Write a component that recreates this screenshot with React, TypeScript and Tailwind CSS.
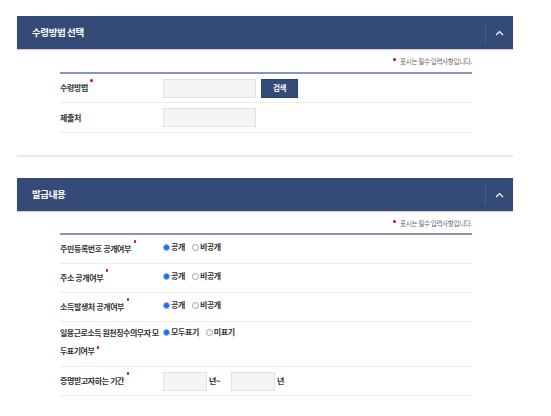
import type { ReactNode } from "react";

const Req = () => (
  <span className="absolute -right-[5px] -top-[4px] h-[2.5px] w-[2.5px] rounded-full bg-[#e60012]" />
);

const Label = ({ children }: { children: ReactNode }) => (
  <span className="relative text-[8px] font-bold leading-[10px] tracking-[-0.4px] text-[#333]">
    {children}
    <Req />
  </span>
);

const Radio = ({ checked, label }: { checked?: boolean; label: string }) => (
  <label className="flex items-center gap-[1px]">
    {checked ? (
      <span className="h-[7px] w-[7px] rounded-full border border-[#8db8f5] bg-[#1a6fe6]" />
    ) : (
      <span className="h-[7px] w-[7px] rounded-full border border-[#a0a0a0] bg-white" />
    )}
    <span className="text-[8px] font-bold leading-[10px] tracking-[-0.4px] text-[#333]">{label}</span>
  </label>
);

const Input = ({ w }: { w: string }) => (
  <div className={`${w} h-[19px] border border-[#e2e2e2] bg-[#f4f4f4]`} />
);

const Row = ({ label, children }: { label: ReactNode; children: ReactNode }) => (
  <div className="flex h-[29px] items-center border-b border-[#ececec]">
    <div className="flex w-[103px] shrink-0 items-center">{label}</div>
    <div className="flex items-center">{children}</div>
  </div>
);

const Section = ({ title, top, children }: { title: string; top: string; children: ReactNode }) => (
  <section>
    <div className="flex h-[33px] items-center bg-[#344b78] pl-[15px] shadow-[0_1px_1px_rgba(0,0,0,0.18)]">
      <h2 className="flex-1 text-[9.5px] font-bold tracking-[-0.4px] text-white">{title}</h2>
      <div className="h-[21px] w-px bg-[#4a6190]" />
      <button className="flex w-[27px] justify-center">
        <svg width="9" height="6" viewBox="0 0 9 6" fill="none">
          <polyline points="1,5 4.5,1.5 8,5" stroke="#fff" strokeWidth="1.2" />
        </svg>
      </button>
    </div>
    <div className="pl-[43px] pr-[41px]">
      <p className="mt-[7px] text-right text-[6.5px] leading-[10px] tracking-[-0.3px] text-[#666]">
        <span className="relative -top-[3px] mr-[4px] inline-block h-[3px] w-[3px] rounded-full bg-[#e60012]" />
        표시는 필수 입력사항입니다.
      </p>
      <div className={`${top} border-t-2 border-[#8696b8]`}>{children}</div>
    </div>
  </section>
);

export default function App() {
  return (
    <div className="h-[416px] w-[551px] overflow-hidden bg-white pt-4 font-['Noto_Sans_CJK_KR','Noto_Sans',sans-serif]">
      <div className="ml-[17px] w-[496px]">
        <Section title="수령방법 선택" top="mt-[6px]">
          <Row label={<Label>수령방법</Label>}>
            <Input w="w-[93px]" />
            <button className="ml-[5px] flex h-[19px] w-[37px] items-center justify-center border border-[#2c4170] bg-[#344b78] text-[7.5px] font-bold tracking-[-0.3px] text-white">
              검색
            </button>
          </Row>
          <div className="flex h-[30px] items-center border-b border-[#ececec]">
            <div className="flex w-[103px] shrink-0 items-center">
              <span className="text-[8px] font-bold leading-[10px] tracking-[-0.4px] text-[#333]">제출처</span>
            </div>
            <Input w="w-[93px]" />
          </div>
        </Section>

        <div className="mt-[22px] h-[2px] bg-[#ebebeb]" />

        <div className="mt-[21px]">
          <Section title="발급내용" top="mt-[5px]">
            <Row label={<Label>주민등록번호 공개여부</Label>}>
              <div className="flex gap-[7px] pb-[4px]">
                <Radio checked label="공개" />
                <Radio label="비공개" />
              </div>
            </Row>
            <Row label={<Label>주소 공개여부</Label>}>
              <div className="flex gap-[7px] pb-[4px]">
                <Radio checked label="공개" />
                <Radio label="비공개" />
              </div>
            </Row>
            <Row label={<Label>소득발생처 공개여부</Label>}>
              <div className="flex gap-[7px] pb-[4px]">
                <Radio checked label="공개" />
                <Radio label="비공개" />
              </div>
            </Row>
            <div className="flex h-[45px] items-start border-b border-[#ececec] pt-[2px]">
              <div className="w-[103px] shrink-0 whitespace-nowrap text-[8px] font-bold leading-[18px] tracking-[-0.5px] text-[#333]">
                일용근로소득 원천징수의무자 모
                <br />
                <span className="relative">
                  두표기여부
                  <span className="absolute -right-[5px] top-[1px] h-[2.5px] w-[2.5px] rounded-full bg-[#e60012]" />
                </span>
              </div>
              <div className="flex gap-[7px] pt-[3px]">
                <Radio checked label="모두표기" />
                <Radio label="미표기" />
              </div>
            </div>
            <Row label={<Label>증명받고자하는 기간</Label>}>
              <Input w="w-[44px]" />
              <span className="ml-[2px] w-[22px] text-[8px] font-bold tracking-[-0.5px] text-[#333]">년~</span>
              <Input w="w-[44px]" />
              <span className="ml-[2px] text-[8px] font-bold text-[#333]">년</span>
            </Row>
          </Section>
        </div>
      </div>
    </div>
  );
}
